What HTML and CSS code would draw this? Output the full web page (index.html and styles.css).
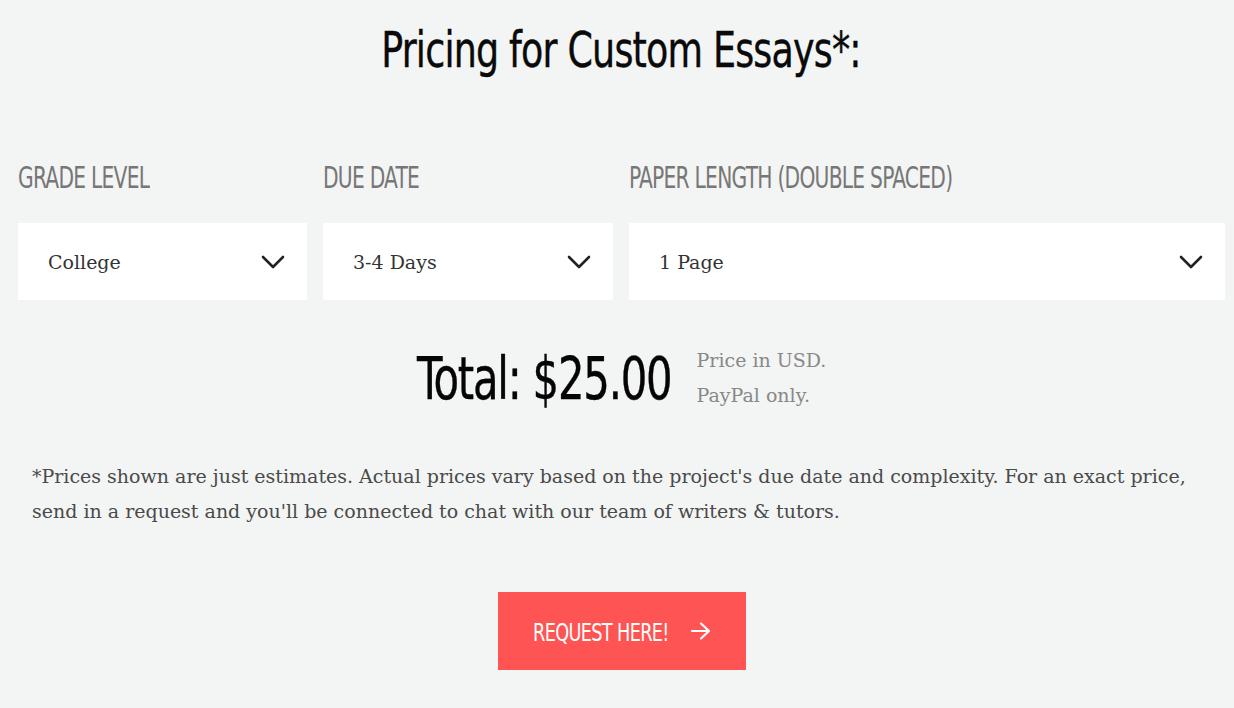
FILE: index.html
```html
<!DOCTYPE html>
<html lang="en">
<head>
<meta charset="utf-8">
<title>Pricing for Custom Essays</title>
<link rel="stylesheet" href="styles.css">
</head>
<body>
<main class="pricing">
  <h1 class="title"><span class="title-text">Pricing for Custom Essays*:</span></h1>

  <div class="fields">
    <div class="field">
      <div class="field-label"><span class="narrow">GRADE LEVEL</span></div>
      <div class="select">
        <span class="select-value">College</span>
        <svg class="chevron" width="24" height="14" viewBox="0 0 24 14"><path d="M2 2 L12 12 L22 2" fill="none" stroke="#222" stroke-width="2.6" stroke-linecap="round" stroke-linejoin="round"/></svg>
      </div>
    </div>
    <div class="field">
      <div class="field-label"><span class="narrow">DUE DATE</span></div>
      <div class="select">
        <span class="select-value">3-4 Days</span>
        <svg class="chevron" width="24" height="14" viewBox="0 0 24 14"><path d="M2 2 L12 12 L22 2" fill="none" stroke="#222" stroke-width="2.6" stroke-linecap="round" stroke-linejoin="round"/></svg>
      </div>
    </div>
    <div class="field">
      <div class="field-label"><span class="narrow">PAPER LENGTH (DOUBLE SPACED)</span></div>
      <div class="select">
        <span class="select-value">1 Page</span>
        <svg class="chevron" width="24" height="14" viewBox="0 0 24 14"><path d="M2 2 L12 12 L22 2" fill="none" stroke="#222" stroke-width="2.6" stroke-linecap="round" stroke-linejoin="round"/></svg>
      </div>
    </div>
  </div>

  <div class="total">
    <div class="total-amount"><span class="total-text">Total: $25.00</span></div>
    <p class="total-note">Price in USD.<br>PayPal only.</p>
  </div>

  <p class="note">*Prices shown are just estimates. Actual prices vary based on the project's due date and complexity. For an exact price, send in a request and you'll be connected to chat with our team of writers &amp; tutors.</p>

  <div class="cta">
    <a class="btn" href="#"><span class="btn-text">REQUEST HERE!</span>
      <svg class="arrow" width="22" height="18" viewBox="0 0 22 18"><path d="M2 9 H19 M11 1.5 L19 9 L11 16.5" fill="none" stroke="#fff" stroke-width="2.2" stroke-linecap="round" stroke-linejoin="round"/></svg>
    </a>
  </div>
</main>
</body>
</html>
```

FILE: styles.css
```css
html, body {
  margin: 0;
  padding: 0;
}

body {
  background: #f3f4f4;
  font-family: "DejaVu Serif", serif;
  color: #444;
}

.pricing {
  padding: 20px 9px 0 18px;
}

.title,
.field-label,
.total-amount,
.btn {
  font-family: "DejaVu Sans Condensed", "DejaVu Sans", sans-serif;
}

.title {
  margin: 0;
  font-weight: 400;
  font-size: 50px;
  line-height: 60px;
  letter-spacing: -1px;
  color: #0a0a0a;
  text-align: center;
}

.title-text {
  display: inline-block;
  transform: scaleX(0.81);
  transform-origin: center;
  white-space: nowrap;
  -webkit-text-stroke: 0.4px #0a0a0a;
}

.fields {
  display: grid;
  grid-template-columns: 289px 290px 596px;
  column-gap: 16px;
  margin-top: 81px;
}

.field-label {
  font-size: 30px;
  font-weight: 400;
  line-height: 34px;
  letter-spacing: -1px;
  color: #777;
  white-space: nowrap;
}

.narrow {
  display: inline-block;
  transform: scaleX(0.75);
  transform-origin: left center;
}

.select {
  margin-top: 28px;
  height: 77px;
  background: #fff;
  display: flex;
  align-items: center;
  justify-content: space-between;
  padding: 0 22px 0 30px;
}

.select-value {
  font-size: 19px;
  color: #333;
}

.chevron {
  display: block;
  flex: none;
}

.total {
  display: flex;
  justify-content: center;
  align-items: flex-start;
  gap: 25px;
  margin-top: 44px;
}

.total-amount {
  width: 255px;
  font-size: 58px;
  font-weight: 400;
  line-height: 70px;
  letter-spacing: -1.5px;
  color: #050505;
  white-space: nowrap;
}

.total-text {
  display: inline-block;
  transform: scaleX(0.8);
  transform-origin: left center;
  -webkit-text-stroke: 0.4px #050505;
}

.total-note {
  margin: -1px 0 0;
  font-size: 19px;
  line-height: 35px;
  color: #888;
}

.note {
  margin: 45px 0 0 14px;
  max-width: 1180px;
  font-size: 19px;
  line-height: 35px;
  color: #4a4a4a;
}

.cta {
  display: flex;
  justify-content: center;
  margin-top: 63px;
}

.btn {
  display: flex;
  align-items: center;
  gap: 22px;
  height: 78px;
  padding: 0 34px 0 35px;
  background: #ff5454;
  color: #fff;
  text-decoration: none;
  font-size: 24px;
  letter-spacing: -0.8px;
}

.btn-text {
  display: inline-block;
  width: 135px;
  margin-top: 4px;
  white-space: nowrap;
  transform: scaleX(0.82);
  transform-origin: left center;
}

.arrow {
  display: block;
  flex: none;
}
```
